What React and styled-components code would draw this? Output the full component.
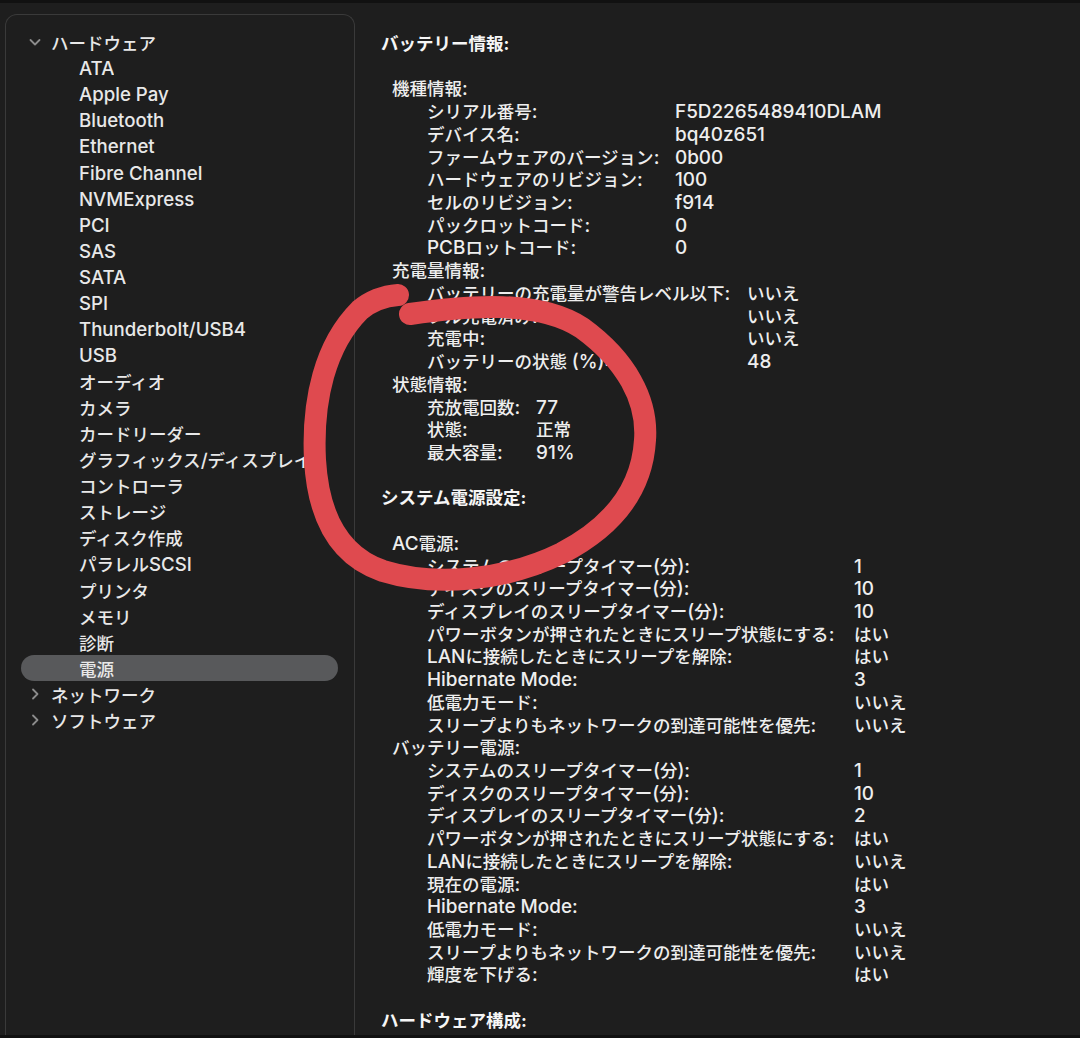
import React from 'react';
import styled, { createGlobalStyle } from 'styled-components';

const GlobalStyle = createGlobalStyle`
    html, body {
        margin: 0;
        padding: 0;
        background: #1e1e1e;
    }
    body {
        font-family: Inter, "Noto Sans CJK JP", sans-serif;
        color: #ececec;
        -webkit-font-smoothing: antialiased;
    }
`

const LINE = 22.72;

const Page = styled.div`
    position: relative;
    width: 1080px;
    height: 1038px;
    display: flex;
    flex-direction: column;
    background: #1e1e1e;
    overflow: hidden;
`

const Strip = styled.div`
    height: 3px;
    flex: none;
    background: #111111;
`

const Main = styled.div`
    flex: 1;
    display: flex;
    min-height: 0;
`

// latin glyphs sit larger than the japanese ones in the original
const Latin = styled.span`
    font-size: 1.065em;
`

const Sidebar = styled.nav`
    width: 350px;
    flex: none;
    box-sizing: border-box;
    margin: 11px 0 0 5px;
    padding: 14px 16px 0 15px;
    border: 1px solid #3a3a3a;
    border-bottom: none;
    border-radius: 12px 12px 0 0;
    background: #1e1e1e;
    font-size: 17.5px;
    font-weight: 500;
    color: #e8e8e8;
`

const Row = styled.div`
    display: flex;
    align-items: center;
    height: 26.1px;
    border-radius: 13px;
    padding-left: ${p => (p.child ? 58 : 7)}px;
    background: ${p => (p.selected ? '#58595b' : 'transparent')};
    white-space: nowrap;
`

const Chevron = styled.svg`
    width: 14px;
    height: 14px;
    flex: none;
    margin-right: 9px;
`

const Label = styled.span`
    display: block;
    max-width: 234px;
    overflow: hidden;
    white-space: nowrap;
`

const Content = styled.main`
    flex: 1;
    padding: 30px 0 0 26px;
    font-size: 17.5px;
    font-weight: 500;
    line-height: ${LINE}px;
    color: #eeeeee;

    ${Latin} {
        font-size: 1.08em;
    }
`

const Heading = styled.div`
    height: ${LINE}px;
    font-weight: 700;
    color: #f6f6f6;
    margin-bottom: ${LINE}px;
`

const Section = styled.section`
    margin-bottom: ${LINE}px;
`

const GroupTitle = styled.div`
    height: ${LINE}px;
    padding-left: 11px;
`

const Grid = styled.div`
    display: grid;
    grid-template-columns: ${p => p.labelWidth}px auto;
    grid-auto-rows: ${LINE}px;
    padding-left: 46px;
    white-space: nowrap;
`

const Annotation = styled.svg`
    position: absolute;
    left: 0;
    top: 0;
    width: 1080px;
    height: 1038px;
    pointer-events: none;
`

const hardware = [
    'ATA', 'Apple Pay', 'Bluetooth', 'Ethernet', 'Fibre Channel', 'NVMExpress',
    'PCI', 'SAS', 'SATA', 'SPI', 'Thunderbolt/USB4', 'USB', 'オーディオ', 'カメラ',
    'カードリーダー', 'グラフィックス/ディスプレイ', 'コントローラ', 'ストレージ',
    'ディスク作成', 'パラレルSCSI', 'プリンタ', 'メモリ', '診断', '電源',
];

const modelInfo = [
    ['シリアル番号:', 'F5D2265489410DLAM'],
    ['デバイス名:', 'bq40z651'],
    ['ファームウェアのバージョン:', '0b00'],
    ['ハードウェアのリビジョン:', '100'],
    ['セルのリビジョン:', 'f914'],
    ['パックロットコード:', '0'],
    ['PCBロットコード:', '0'],
];

const chargeInfo = [
    ['バッテリーの充電量が警告レベル以下:', 'いいえ'],
    ['フル充電済み:', 'いいえ'],
    ['充電中:', 'いいえ'],
    ['バッテリーの状態 (%):', '48'],
];

const healthInfo = [
    ['充放電回数:', '77'],
    ['状態:', '正常'],
    ['最大容量:', '91%'],
];

const acPower = [
    ['システムのスリープタイマー(分):', '1'],
    ['ディスクのスリープタイマー(分):', '10'],
    ['ディスプレイのスリープタイマー(分):', '10'],
    ['パワーボタンが押されたときにスリープ状態にする:', 'はい'],
    ['LANに接続したときにスリープを解除:', 'はい'],
    ['Hibernate Mode:', '3'],
    ['低電力モード:', 'いいえ'],
    ['スリープよりもネットワークの到達可能性を優先:', 'いいえ'],
];

const batteryPower = [
    ['システムのスリープタイマー(分):', '1'],
    ['ディスクのスリープタイマー(分):', '10'],
    ['ディスプレイのスリープタイマー(分):', '2'],
    ['パワーボタンが押されたときにスリープ状態にする:', 'はい'],
    ['LANに接続したときにスリープを解除:', 'いいえ'],
    ['現在の電源:', 'はい'],
    ['Hibernate Mode:', '3'],
    ['低電力モード:', 'いいえ'],
    ['スリープよりもネットワークの到達可能性を優先:', 'いいえ'],
    ['輝度を下げる:', 'はい'],
];

const Txt = ({ children }) => (
    <>
        {children.split(/([!-~](?:[ -~]*[!-~])?)/).map((part, i) =>
            i % 2 === 1 ? <Latin key={i}>{part}</Latin> : part
        )}
    </>
)

const Disclosure = ({ open }) => (
    <Chevron viewBox="0 0 14 14">
        {open
            ? <polyline points="2.5,5 7,9.5 11.5,5" fill="none" stroke="#8c8c8c" strokeWidth="1.8" strokeLinecap="round" strokeLinejoin="round" />
            : <polyline points="5,2.5 9.5,7 5,11.5" fill="none" stroke="#8c8c8c" strokeWidth="1.8" strokeLinecap="round" strokeLinejoin="round" />}
    </Chevron>
)

const Group = ({ title, rows, labelWidth }) => (
    <>
        <GroupTitle><Txt>{title}</Txt></GroupTitle>
        <Grid labelWidth={labelWidth}>
            {rows.map(([k, v], i) => (
                <React.Fragment key={i}>
                    <span><Txt>{k}</Txt></span>
                    <span><Txt>{v}</Txt></span>
                </React.Fragment>
            ))}
        </Grid>
    </>
)

const App = () => {
    return (
        <Page>
            <GlobalStyle />
            <Strip />
            <Main>
                <Sidebar>
                    <Row><Disclosure open /><span>ハードウェア</span></Row>
                    {hardware.map(name => (
                        <Row key={name} child selected={name === '電源'}>
                            <Label><Txt>{name}</Txt></Label>
                        </Row>
                    ))}
                    <Row><Disclosure /><span>ネットワーク</span></Row>
                    <Row><Disclosure /><span>ソフトウェア</span></Row>
                </Sidebar>

                <Content>
                    <Heading>バッテリー情報:</Heading>
                    <Section>
                        <Group title="機種情報:" rows={modelInfo} labelWidth={248} />
                        <Group title="充電量情報:" rows={chargeInfo} labelWidth={320} />
                        <Group title="状態情報:" rows={healthInfo} labelWidth={109} />
                    </Section>

                    <Heading>システム電源設定:</Heading>
                    <Section>
                        <Group title="AC電源:" rows={acPower} labelWidth={427} />
                        <Group title="バッテリー電源:" rows={batteryPower} labelWidth={427} />
                    </Section>

                    <Heading>ハードウェア構成:</Heading>
                </Content>
            </Main>
            <Strip />

            {/* hand drawn red loop on top of the screenshot */}
            <Annotation viewBox="0 0 1080 1038">
                <path
                    d="M 410,314 C 470,305 540,300 582,328 C 626,360 648,400 645,440 C 642,492 610,528 562,553 C 505,581 435,587 383,571 C 336,555 318,512 315,460 C 312,400 325,345 360,310 C 372,300 385,296 398,295"
                    fill="none"
                    stroke="#df4a4f"
                    strokeWidth="22"
                    strokeLinecap="round"
                    strokeLinejoin="round"
                />
            </Annotation>
        </Page>
    )
}

export default App;
